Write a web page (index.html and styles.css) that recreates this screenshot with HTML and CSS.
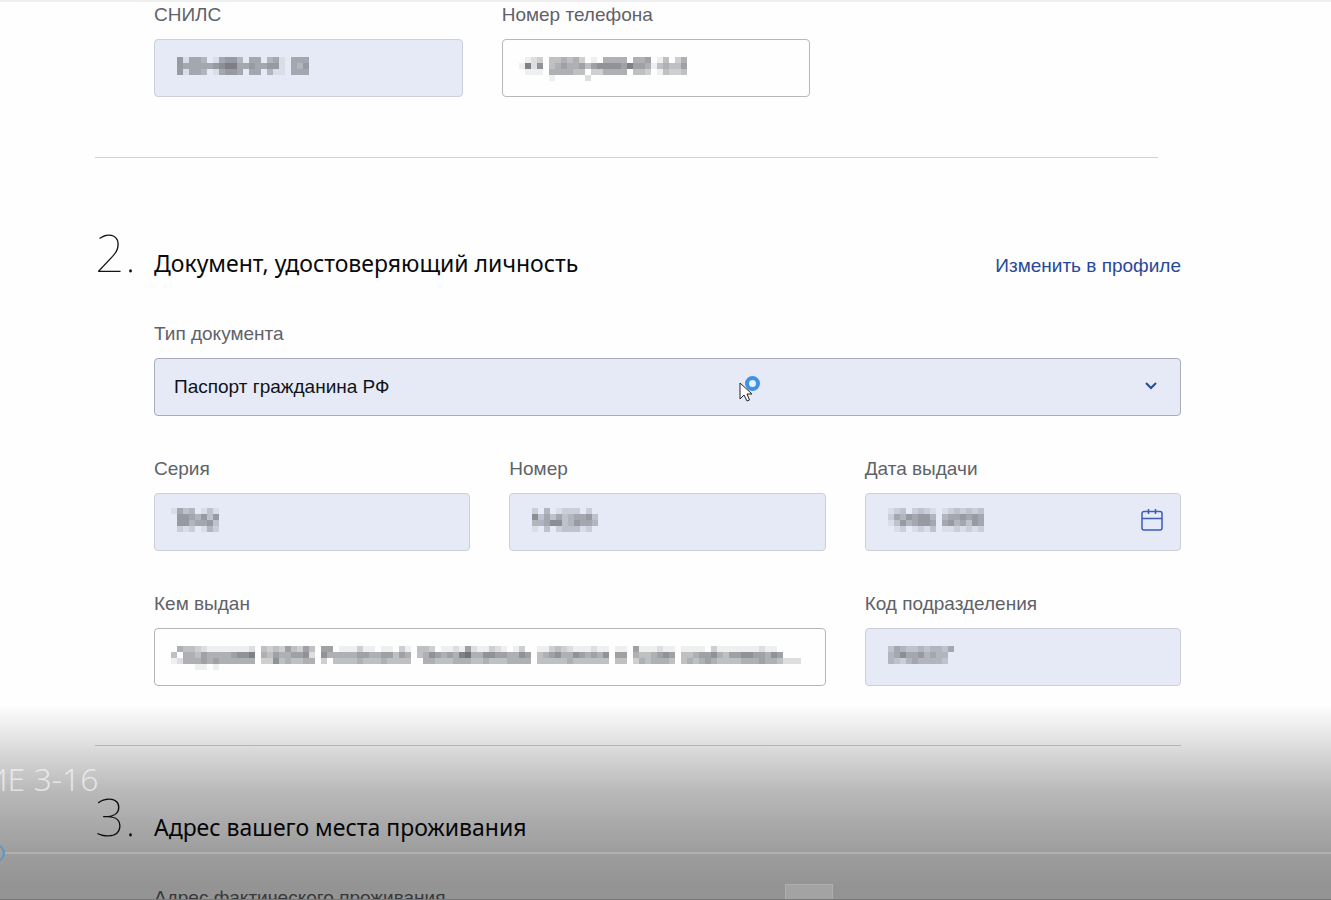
FILE: index.html
```html
<!DOCTYPE html>
<html lang="ru">
<head>
<meta charset="utf-8">
<meta name="viewport" content="width=device-width, initial-scale=1">
<title>Заявление</title>
<link rel="stylesheet" href="styles.css">
</head>
<body>
<main class="page">
  <section class="section section-contacts">
    <div class="fields">
      <div class="field">
        <label for="snils">СНИЛС</label>
        <div class="control">
          <input class="filled" id="snils" type="text" readonly>
          <svg class="mosaic" data-cells="06155401566405504510555|06555556788556556610546|06155401566505504110555" aria-hidden="true"></svg>
        </div>
      </div>
      <div class="field">
        <label for="phone">Номер телефона</label>
        <div class="control">
          <input id="phone" type="tel">
          <svg class="mosaic" data-cells="0123044545301055550556014035|1827045655646777768665145446|0111055554403355550443014334|0000010000020000000000000000" aria-hidden="true"></svg>
        </div>
      </div>
    </div>
  </section>

  <section class="section section-document">
    <header class="heading">
      <span class="number">2.</span>
      <h2>Документ, удостоверяющий личность</h2>
      <a href="#profile">Изменить в профиле</a>
    </header>
    <div class="fields">
      <div class="field field-full">
        <label for="doc-type">Тип документа</label>
        <div class="control">
          <select class="filled" id="doc-type">
            <option>Паспорт гражданина РФ</option>
          </select>
          <svg class="chevron" viewBox="0 0 14 10" aria-hidden="true"><path d="M2 2l5 5 5-5"/></svg>
          <svg class="pointer" viewBox="0 0 24 30" aria-hidden="true">
            <circle cx="13.500" cy="9.500" r="5.500"/>
            <path d="M1 9v16l4-4 3 6 2.500-1-2.500-6h5z"/>
          </svg>
        </div>
      </div>
      <div class="field">
        <label for="series">Серия</label>
        <div class="control">
          <input class="filled" id="series" type="text" readonly>
          <svg class="mosaic mosaic-tall" data-cells="15340131|06654636|06645563|02120142" aria-hidden="true"></svg>
        </div>
      </div>
      <div class="field">
        <label for="doc-number">Номер</label>
        <div class="control">
          <input class="filled" id="doc-number" type="text" readonly>
          <svg class="mosaic mosaic-tall" data-cells="020401222020|073535345563|044577346554|010302333120" aria-hidden="true"></svg>
        </div>
      </div>
      <div class="field">
        <label for="date">Дата выдачи</label>
        <div class="control">
          <input class="filled" id="date" type="text" readonly>
          <svg class="mosaic mosaic-tall" data-cells="01230232101232323|02546566404556565|01364566505645365|00120121301121212" aria-hidden="true"></svg>
          <button class="calendar" type="button" aria-label="Выбрать дату">
            <svg viewBox="0 0 24 24" aria-hidden="true"><path d="M4 3.500h16a2 2 0 0 1 2 2v14.500a2 2 0 0 1-2 2H4a2 2 0 0 1-2-2V5.500a2 2 0 0 1 2-2zM2 10.500h20M8.500 1V6M15.500 1V6"/></svg>
          </button>
        </div>
      </div>
      <div class="field field-wide">
        <label for="issuer">Кем выдан</label>
        <div class="control">
          <input id="issuer" type="text">
          <svg class="mosaic" data-cells="05443211111112 434364364 660111311011031 4430112162113210130 113432111211 11 6111211011110311111112110|40554655556778 546556672 755555665566465 4576565895577665576 456755765657 66 5445676044566754667766576|12555656555555 337454455 304444544454444 0554445554454445555 444445444444 44 3545554045456544445556554222|00001101" aria-hidden="true"></svg>
        </div>
      </div>
      <div class="field">
        <label for="code">Код подразделения</label>
        <div class="control">
          <input class="filled" id="code" type="text" readonly>
          <svg class="mosaic" data-cells="035433434435|045755645440|043245444430" aria-hidden="true"></svg>
        </div>
      </div>
    </div>
  </section>

  <section class="section section-address">
    <header class="heading">
      <span class="number">3.</span>
      <h2>Адрес вашего места проживания</h2>
    </header>
    <div class="fields">
      <div class="field field-full">
        <label for="address">Адрес фактического проживания</label>
        <div class="control"><input id="address" type="text"></div>
      </div>
    </div>
  </section>
</main>

<div class="player">
  <span class="video-title">ИЕ 3-16</span>
  <input class="seek" type="range" min="0" max="100" value="0" aria-label="Перемотка">
  <button class="player-button" type="button" aria-label="Управление"></button>
</div>
<script src="mosaic.js"></script>
</body>
</html>
```
FILE: styles.css
```css
* {
  box-sizing: border-box;
}

body {
  margin: 0;
  height: 100vh;
  overflow: hidden;
  position: relative;
  background: #fefefe;
  color: #101318;
  font: 19px/24px "Liberation Sans", Arial, sans-serif;
}

.page {
  height: 100%;
  overflow: hidden;
  padding: 0 150px 0 95px;
  border-top: 2px solid #eeeeee;
}

.section {
  border-bottom: 1px solid #d0d1d3;
}

.section-contacts {
  margin-right: 23px;
  padding: 1px 0 60px;
}

.section-document {
  padding: 64px 0 59px;
}

.section-address {
  padding: 40px 0 60px;
}

.heading {
  display: flex;
  align-items: baseline;
  height: 100px;
}

.number {
  width: 59px;
  flex: none;
  font: 100 52px/60px "Noto Sans", sans-serif;
}

h2 {
  flex: 1;
  margin: 0;
  color: #08090c;
  font: 400 23px/32px "Noto Sans", sans-serif;
}

a {
  color: #27489b;
  text-decoration: none;
}

.fields {
  display: grid;
  grid-template-columns: repeat(3, minmax(0, 1fr));
  gap: 41px 39px;
  padding-left: 59px;
}

.field-full {
  grid-column: 1 / -1;
}

.field-wide {
  grid-column: span 2;
}

label {
  display: block;
  margin-bottom: 12px;
  color: #5e6269;
}

.control {
  position: relative;
}

.control > input,
select {
  display: block;
  width: 100%;
  height: 58px;
  padding: 0 19px;
  border: 1px solid #b5b6b9;
  border-radius: 4px;
  background: #fefefe;
  color: #101318;
  font: inherit;
  appearance: none;
}

.control > .filled {
  background: #e6eaf6;
  border-color: #cccfd8;
}

.control > select.filled {
  border-color: #a9adba;
}

.mosaic {
  position: absolute;
  left: 17px;
  top: 18px;
  pointer-events: none;
  fill: #707277;
}

.mosaic-tall {
  top: 15px;
}

.chevron {
  position: absolute;
  right: 23px;
  top: 23px;
  width: 14px;
  height: 10px;
  fill: none;
  stroke: #27489b;
  stroke-width: 2;
  pointer-events: none;
}

.pointer {
  position: absolute;
  left: 57%;
  top: 16px;
  width: 24px;
  height: 30px;
  pointer-events: none;
}

.pointer circle {
  fill: #dff1fd;
  stroke: #3f92e2;
  stroke-width: 4;
}

.pointer path {
  fill: #ffffff;
  stroke: #22242a;
}

.calendar {
  position: absolute;
  right: 17px;
  top: 15px;
  width: 24px;
  height: 24px;
  padding: 0;
  border: 0;
  background: none;
}

.calendar svg {
  display: block;
  fill: none;
  stroke: #3c5db5;
  stroke-width: 1.5;
}

.player {
  position: absolute;
  left: 0;
  right: 0;
  bottom: 0;
  height: 195px;
  overflow: hidden;
  border-bottom: 1px solid #777777;
  background: linear-gradient(
    rgba(0, 0, 0, 0),
    rgba(0, 0, 0, 0.13) 21%,
    rgba(0, 0, 0, 0.27) 44%,
    rgba(0, 0, 0, 0.33) 60%,
    rgba(0, 0, 0, 0.38) 76%,
    rgba(0, 0, 0, 0.42) 93%
  );
}

.video-title {
  position: absolute;
  left: -16px;
  top: 52px;
  color: rgba(255, 255, 255, 0.6);
  font: 300 32px/44px "Noto Sans", sans-serif;
  white-space: nowrap;
}

.seek {
  position: absolute;
  left: -13px;
  right: 0;
  top: 139px;
  width: calc(100% + 13px);
  height: 18px;
  margin: 0;
  background: none;
  appearance: none;
}

.seek::-webkit-slider-runnable-track {
  height: 2px;
  background: #b0b0b0;
}

.seek::-webkit-slider-thumb {
  width: 18px;
  height: 18px;
  margin-top: -8px;
  border: 2px solid #5b97c6;
  border-radius: 50%;
  background: #a0a0a0;
  appearance: none;
}

.player-button {
  position: absolute;
  left: 59%;
  bottom: 0;
  width: 48px;
  height: 15px;
  padding: 0;
  border: 1px solid #aeaeae;
  border-bottom: 0;
  background: #a3a3a3;
}
```
FILE: mosaic.js
```js
// Each digit is the strength of one 6px cell, a space is an empty cell;
// rows are separated by "|".
const CELL = 6;

document.querySelectorAll(".mosaic").forEach((svg) => {
  const rows = svg.dataset.cells.split("|");
  svg.setAttribute("width", Math.max(...rows.map((row) => row.length)) * CELL);
  svg.setAttribute("height", rows.length * CELL);
  rows.forEach((row, y) => {
    [...row].forEach((level, x) => {
      if (level === "0" || level === " ") return;
      const rect = document.createElementNS("http://www.w3.org/2000/svg", "rect");
      rect.setAttribute("x", x * CELL);
      rect.setAttribute("y", y * CELL);
      rect.setAttribute("width", CELL);
      rect.setAttribute("height", CELL);
      rect.setAttribute("fill-opacity", level / 9);
      svg.append(rect);
    });
  });
});
```
